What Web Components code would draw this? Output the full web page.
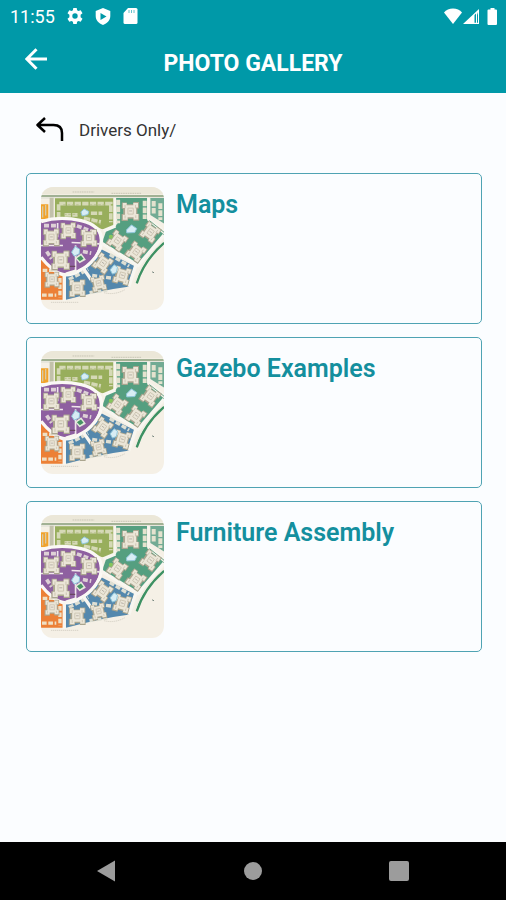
<!DOCTYPE html>
<html lang="en">
<head>
<meta charset="utf-8">
<meta name="viewport" content="width=device-width, initial-scale=1">
<title>Photo Gallery</title>
<style>
  body {
    background-color: #fbfdff;
    font-family: Roboto, sans-serif;
    margin: 0;
  }
</style>
</head>
<body>
<gallery-screen>
  <status-bar slot="top" time="11:55"></status-bar>
  <app-bar slot="top">PHOTO GALLERY</app-bar>
  <folder-path>Drivers Only/</folder-path>
  <album-list>
    <album-card>Maps</album-card>
    <album-card>Gazebo Examples</album-card>
    <album-card>Furniture Assembly</album-card>
  </album-list>
  <nav-bar slot="bottom"></nav-bar>
</gallery-screen>

<script>
// gallery-screen

class GalleryScreen extends HTMLElement {
  constructor() {
    super();
    const shadow = this.attachShadow({mode: 'open'});
    shadow.innerHTML = `
    <style>
      :host {
        display: flex;
        flex-direction: column;
        min-height: 100vh;
      }

      header {
        background-color: #0099a8;
        color: white;
      }

      main {
        display: flex;
        flex: 1;
        flex-direction: column;
        gap: 30px;
        padding: 24px 24px 24px 26px;
      }
    </style>
    <header><slot name="top"></slot></header>
    <main><slot></slot></main>
    <slot name="bottom"></slot>`;
  }
}

// status-bar

class StatusBar extends HTMLElement {
  constructor() {
    super();
    const shadow = this.attachShadow({mode: 'open'});
    shadow.innerHTML = `
    <style>
      :host {
        align-items: center;
        display: flex;
        font-size: 18px;
        height: 32px;
        justify-content: space-between;
        padding: 0 8px 0 10px;
      }

      div {
        align-items: center;
        display: flex;
      }

      .left {
        gap: 12px;
      }

      svg {
        display: block;
        fill: white;
      }
    </style>
    <div class="left">
      <span></span>
      <svg width="16" height="16" viewBox="0 0 16 16"><path fill-rule="evenodd" d="M6.3 0h3.4l.4 2.3 1.4.8 2.2-.9 1.8 3-1.9 1.5v2.6l1.9 1.5-1.8 3-2.2-.9-1.4.8-.4 2.3H6.3l-.4-2.3-1.4-.8-2.2.9-1.8-3 1.9-1.5V6.7L.5 5.200l1.8-3 2.200.9 1.400-.8zM8 5.300a2.700 2.700 0 1 0 0 5.400 2.700 2.700 0 0 0 0-5.400z"/></svg>
      <svg width="16" height="17" viewBox="0 0 16 17"><path fill-rule="evenodd" d="M8 0l7.300 3v5c0 4-3 7.500-7.300 9C3.700 15.500.7 12 .7 8V3zM5.500 5v7l6-3.500z"/></svg>
      <svg width="15" height="16" viewBox="0 0 15 16"><path fill-rule="evenodd" d="M5 0h8a1.500 1.500 0 0 1 1.500 1.500v13A1.500 1.500 0 0 1 13 16H2a1.500 1.500 0 0 1-1.500-1.500V5z"/><path stroke="#0099a8" stroke-opacity=".6" d="M6 2v3M8.500 2v3M11 2v3"/></svg>
    </div>
    <div>
      <svg width="20" height="16" viewBox="0 0 20 16"><path d="M1 4.500C3 2 6.500.5 10 .5s7 1.500 9 4L10 16z"/></svg>
      <svg width="17" height="16" viewBox="0 0 17 16"><path fill-rule="evenodd" d="M0 16L16 1v15zM11.500 7v7.800H13V5.600zm2.500 0v7.800h1V4z"/></svg>
      <svg width="18" height="18" viewBox="0 0 18 18"><path d="M10.500 1h4v1.500H16a1 1 0 0 1 1 1V17a1 1 0 0 1-1 1H8.500a1 1 0 0 1-1-1V3.500a1 1 0 0 1 1-1h2z"/></svg>
    </div>`;
    shadow.querySelector('span').textContent = this.getAttribute('time');
  }
}

// app-bar

class AppBar extends HTMLElement {
  constructor() {
    super();
    const shadow = this.attachShadow({mode: 'open'});
    shadow.innerHTML = `
    <style>
      :host {
        align-items: center;
        display: grid;
        grid-template-columns: 48px 1fr 48px;
        height: 61px;
        padding: 0 12px;
      }

      button {
        background: none;
        border: none;
        color: inherit;
        cursor: pointer;
        height: 48px;
        padding: 0 0 8px;
      }

      svg {
        display: block;
        margin: auto;
      }

      h1 {
        font-size: 23px;
        font-weight: 700;
        line-height: 28px;
        margin: 0;
        padding-top: 2px;
        text-align: center;
      }
    </style>
    <button type="button" aria-label="Back">
      <svg width="22" height="22" viewBox="0 0 22 22" fill="none" stroke="currentColor" stroke-width="3"><path d="M22 11H2M11.500 1.200L1.800 11l9.700 9.800"/></svg>
    </button>
    <h1><slot></slot></h1>`;
  }
}

// folder-path

class FolderPath extends HTMLElement {
  constructor() {
    super();
    const shadow = this.attachShadow({mode: 'open'});
    shadow.innerHTML = `
    <style>
      :host {
        align-items: center;
        color: #333;
        display: flex;
        font-size: 17px;
        gap: 15px;
        height: 26px;
        padding: 0 10px;
      }

      button {
        background: none;
        border: none;
        color: black;
        cursor: pointer;
        padding: 0;
      }

      svg {
        display: block;
      }
    </style>
    <button type="button" aria-label="Up one folder">
      <svg width="28" height="26" viewBox="0 0 28 26" fill="none" stroke="currentColor" stroke-width="2.500" stroke-linejoin="round"><path d="M9 1L1.500 8 9 15M1.500 8h16c6 0 8.500 3.500 8.500 8v8"/></svg>
    </button>
    <span><slot></slot></span>`;
  }
}

// site-map, the thumbnail

// x, y, rotation, scale of each building
const houses = [
  [330, 137, 0, .95], [92, 215, 0, .9], [143, 195, 0, .85], [205, 217, 0, .9],
  [120, 284, 0, 1], [94, 342, 0, .8], [390, 200, 35, .9], [291, 225, 35, .9],
  [347, 259, 35, .9], [247, 293, 35, .9], [170, 368, 0, .9], [234, 354, -12, .8],
  [305, 330, 15, .9]
];

class SiteMap extends HTMLElement {
  constructor() {
    super();
    const shadow = this.attachShadow({mode: 'open'});
    const buildings = houses.map(h =>
      `<use href="#house" transform="translate(${h[0]} ${h[1]}) rotate(${h[2]}) scale(${h[3]})"/>`
    ).join('');

    shadow.innerHTML = `
    <style>
      :host {
        border-radius: 12px;
        display: block;
        height: 123px;
        overflow: hidden;
        width: 123px;
      }

      svg {
        display: block;
      }
    </style>
    <svg width="123" height="123" viewBox="61 64 370 370" fill="none" aria-hidden="true">
      <defs>
        <g id="house">
          <path fill="#aaa58f" d="M-27-28h16v6h20v-7h18v20h-5V8h6v22H9v-6h-17v7h-20V9h5V-8h-5z"/>
          <path fill="#ebe6d8" d="M-24-26h12v7H9v-7h15v14H18V9h7v17H10v-7H-9v8h-15V11h7V-10h-7z"/>
          <path stroke="#cdc5b2" stroke-width="3" d="M-17-20v10M16-20v11M-17 13v10M17 13v8M-8-10H9V9H-8z"/>
          <path stroke="#999189" stroke-width="2" d="M-4-1H5"/>
        </g>
      </defs>
      <path fill="#f5f0e6" d="M61 64h370v370H61z"/>
      <path fill="#ebe7d8" d="M61 64h370v22H61z"/>
      <path stroke="#b7b5a4" stroke-width="2" stroke-dasharray="5 2" d="M156 79h65M273 83h90"/>
      <path stroke="#849d78" stroke-width="4" d="M61 91h370"/>
      <path stroke="#e7e6dc" stroke-width="6" d="M61 97h370"/>

      <path fill="#f1a32c" d="M61 116h22v44H61z"/>
      <path stroke="#d9c9a4" stroke-width="4" d="M66 122v34M75 118v32"/>
      <path fill="#c2c1aa" d="M87 96h12v65H87z"/>
      <path fill="#98ae5c" d="M103 98h176v96l-36-4-48-24-92-7z"/>
      <path stroke="#d5d9b6" stroke-width="11" stroke-dasharray="19 4" d="M114 158v-44h157v56M132 148h39M211 143h34M190 158l51 11"/>
      <path stroke="#b3bb88" stroke-width="3" stroke-dasharray="8 5" d="M128 118h46M207 118h48M130 146h43M198 164l43 12"/>

      <path fill="#559f80" d="M286 97h95v68l50 42-78 92-109-65 14-41 33-18z"/>
      <path fill="#72ab94" d="M390 97h41v77l-41-26z"/>
      <path stroke="#e4e2ce" stroke-width="12" stroke-dasharray="17 4" d="M293 102v71M373 105v55M400 106v42M420 113v50"/>
      <path stroke="#f7f4ec" stroke-width="8" d="M283 96v86M384 96v63l47 38"/>
      <path stroke="#6ba387" stroke-width="3" d="M387 165l44 35"/>

      <path fill="#8e60a0" d="M61 169q55-22 119-5c36 9 58 25 58 59 0 43-36 79-73 96q-19 10-35 5c-35-6-54-32-69-48z"/>
      <path stroke="#f0e6eb" stroke-width="5" d="M61 240h66M153 231l84 4M165 239v80M111 172v43"/>
      <path stroke="#ded1d6" stroke-width="11" stroke-dasharray="15 6" d="M70 180h40M169 181l47 17M78 258l15 22M187 258l25 5"/>
      <path fill="#ec8036" d="M61 275q23 38 66 51v77H61z"/>
      <path stroke="#eee0c5" stroke-width="10" stroke-dasharray="14 5" d="M66 315h35M64 389h43M118 338v58"/>
      <path fill="#5488ad" d="M244 252l102 52-18 59q-84 11-192 40v-73q65-15 108-78z"/>
      <path stroke="#dedfd3" stroke-width="10" stroke-dasharray="15 6" d="M145 342l58-30M215 330l58 8M207 382l53-8M268 267l58 35"/>

      <path stroke="#fbf9f5" stroke-width="10" d="M61 168q55-18 121-3c38 9 61 28 61 60 0 40-35 76-69 92-29 18-57 13-80-8q-18-14-33-34"/>
      <path stroke="#f8f6f0" stroke-width="10" d="M249 196l36-15M242 232l111 68 78-91M346 300l-21 64M131 325v81M188 308l24 35M136 326l32-10"/>
      <path stroke="#3d9163" stroke-width="7" d="M431 232q-61 54-82 122"/>
      <path stroke="#eeece0" stroke-width="3" d="M431 225q-67 55-88 127"/>

      ${buildings}

      <g fill="#d8edf4" stroke="#8fc6da" stroke-width="3">
        <path d="M181 139l10-9 14 8-3 9-17 4z"/>
        <path d="M318 193l15-15 16 11-6 12-24 1z"/>
        <path d="M153 260l11-17 13 8-1 14-15 7z"/>
        <path d="M269 313l12-15 10 7-3 16-12 5z"/>
      </g>
      <path fill="#e4eadb" d="M163 277l19-14 14 20-19 10z"/>
      <path fill="#469264" d="M169 278l12-8 8 10-11 7z"/>
      <circle cx="271" cy="214" r="6" fill="#86c65b"/>
      <path stroke="#6a4760" stroke-width="4" d="M148 303h16"/>
      <path stroke="#77877e" stroke-width="3" d="M395 319l6 3"/>
      <path stroke="#c8c4b8" stroke-width="2" stroke-dasharray="4 2" d="M91 411h82M251 382q32 8 62-9"/>
    </svg>`;
  }
}

// album-card

class AlbumCard extends HTMLElement {
  constructor() {
    super();
    const shadow = this.attachShadow({mode: 'open'});
    shadow.innerHTML = `
    <style>
      :host {
        display: block;
      }

      a {
        border: 1px solid #4fa3b3;
        border-radius: 5px;
        color: #148f9e;
        display: flex;
        gap: 12px;
        padding: 13px 14px;
        text-decoration: none;
      }

      h2 {
        font-size: 25px;
        font-weight: 600;
        line-height: 36px;
        margin: 0;
      }
    </style>
    <a href="#">
      <site-map></site-map>
      <h2><slot></slot></h2>
    </a>`;
  }
}

// album-list

class AlbumList extends HTMLElement {
  constructor() {
    super();
    const shadow = this.attachShadow({mode: 'open'});
    shadow.innerHTML = `
    <style>
      :host {
        display: flex;
        flex-direction: column;
        gap: 13px;
      }
    </style>
    <slot></slot>`;
  }
}

// nav-bar

class NavBar extends HTMLElement {
  constructor() {
    super();
    const shadow = this.attachShadow({mode: 'open'});
    shadow.innerHTML = `
    <style>
      :host {
        display: block;
      }

      nav {
        background-color: black;
        display: flex;
        height: 58px;
        justify-content: center;
      }

      button {
        background: none;
        border: none;
        cursor: pointer;
        flex: 0 1 146px;
        padding: 0;
      }

      svg {
        display: block;
        fill: #9c9c9c;
        margin: auto;
      }
    </style>
    <nav>
      <button type="button" aria-label="Back"><svg width="20" height="22" viewBox="0 0 20 22"><path d="M0 11L18 .5v21z"/></svg></button>
      <button type="button" aria-label="Home"><svg width="20" height="20" viewBox="0 0 20 20"><circle cx="10" cy="10" r="9"/></svg></button>
      <button type="button" aria-label="Recent apps"><svg width="20" height="20" viewBox="0 0 20 20"><rect width="20" height="20" rx="2"/></svg></button>
    </nav>`;
  }
}

customElements.define('site-map', SiteMap);
customElements.define('gallery-screen', GalleryScreen);
customElements.define('status-bar', StatusBar);
customElements.define('app-bar', AppBar);
customElements.define('folder-path', FolderPath);
customElements.define('album-card', AlbumCard);
customElements.define('album-list', AlbumList);
customElements.define('nav-bar', NavBar);
</script>
</body>
</html>
